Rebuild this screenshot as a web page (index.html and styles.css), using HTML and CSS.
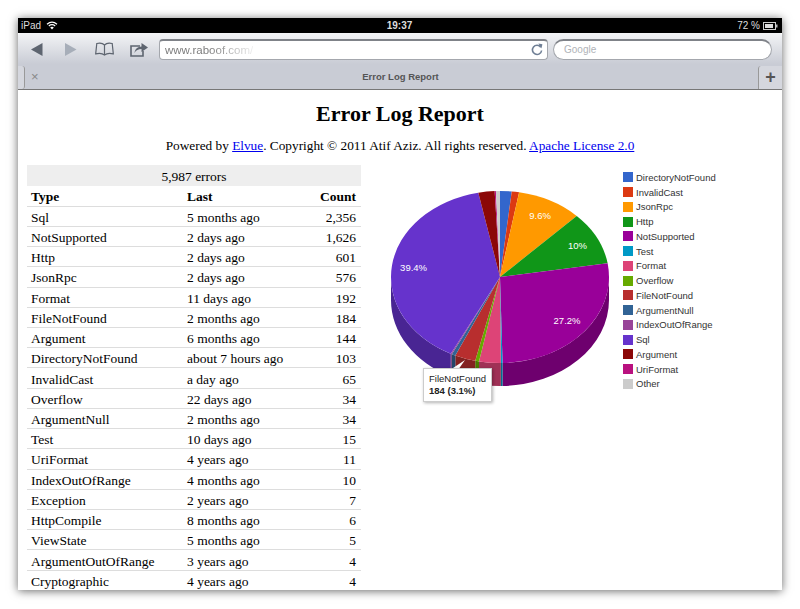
FILE: index.html
```html
<!DOCTYPE html>
<html lang="en">
<head>
    <meta charset="UTF-8">
    <meta name="viewport" content="width=device-width, initial-scale=1.0">
    <title>Error Log Report</title>
    <link rel="stylesheet" href="styles.css">
</head>
<body>
    <div class="window">
        <div class="statusbar">
            <div class="status-side">
                <span>iPad</span>
                <svg class="wifi" width="12" height="9" viewBox="0 0 12 9">
                    <path d="M1 3.2C4 .6 8 .6 11 3.2M2.8 5C4.8 3.4 7.2 3.4 9.2 5" fill="none" stroke="#fff" stroke-width="1.2"/>
                    <path d="M4.2 6.4C5.3 5.6 6.7 5.6 7.8 6.4L6 8.4Z" fill="#fff"/>
                </svg>
            </div>
            <div class="status-time">19:37</div>
            <div class="status-side status-right">
                <span>72 %</span>
                <svg width="15" height="8" viewBox="0 0 15 8">
                    <rect x=".5" y=".5" width="12" height="7" fill="none" stroke="#ccc"/>
                    <rect x="2" y="2" width="8" height="4" fill="#ddd"/>
                    <rect x="13" y="2.5" width="1.5" height="3" fill="#bbb"/>
                </svg>
            </div>
        </div>

        <div class="toolbar">
            <svg class="tool" width="12" height="13" viewBox="0 0 12 13"><path d="M0 6.5L11.5 0V13Z" fill="#5e6570"/></svg>
            <svg class="tool" width="12" height="13" viewBox="0 0 12 13"><path d="M11.5 6.5L0 0V13Z" fill="#a7aeb9"/></svg>
            <svg class="tool" width="19" height="14" viewBox="0 0 19 14">
                <path d="M9.5 3C8 1.4 4.5.8 1.8 1.5L.7 11.8C3.8 11 7.4 11.2 9.5 13C11.6 11.2 15.2 11 18.3 11.8L17.2 1.5C14.5.8 11 1.4 9.5 3ZM9.5 3V13" fill="none" stroke="#5e6570" stroke-width="1.2"/>
            </svg>
            <svg class="tool" width="18" height="15" viewBox="0 0 18 15">
                <path d="M10 4H1V14H13V9" fill="none" stroke="#5e6570" stroke-width="1.6"/>
                <path d="M4.5 11C5 6.5 8 4.6 11.5 4.4V1L18 5.5L11.5 10V7C8.5 7 6 8 4.5 11Z" fill="#5e6570"/>
            </svg>
            <div class="address">
                <span class="url">www.raboof.com/</span>
                <svg width="12" height="13" viewBox="0 0 12 13">
                    <path d="M9.8 4.2A4.6 4.6 0 1 0 10.6 7.5" fill="none" stroke="#6f7f95" stroke-width="1.6"/>
                    <path d="M7.4 0.6L11.4 1.2L10.4 5.6Z" fill="#6f7f95"/>
                </svg>
            </div>
            <div class="search">Google</div>
        </div>

        <div class="tabbar">
            <div class="tab-stub"></div>
            <span class="tab-close">×</span>
            <div class="tab-title">Error Log Report</div>
            <div class="tab-new">+</div>
        </div>

        <div class="content">
            <h1>Error Log Report</h1>
            <p class="powered">Powered by <a href="#">Elvue</a>. Copyright © 2011 Atif Aziz. All rights reserved. <a href="#">Apache License 2.0</a></p>

            <div class="report">
                <table class="errors">
                    <caption>5,987 errors</caption>
                    <thead>
                        <tr><th>Type</th><th>Last</th><th class="num">Count</th></tr>
                    </thead>
                    <tbody>
                        <tr><td>Sql</td><td>5 months ago</td><td class="num">2,356</td></tr>
                        <tr><td>NotSupported</td><td>2 days ago</td><td class="num">1,626</td></tr>
                        <tr><td>Http</td><td>2 days ago</td><td class="num">601</td></tr>
                        <tr><td>JsonRpc</td><td>2 days ago</td><td class="num">576</td></tr>
                        <tr><td>Format</td><td>11 days ago</td><td class="num">192</td></tr>
                        <tr><td>FileNotFound</td><td>2 months ago</td><td class="num">184</td></tr>
                        <tr><td>Argument</td><td>6 months ago</td><td class="num">144</td></tr>
                        <tr><td>DirectoryNotFound</td><td>about 7 hours ago</td><td class="num">103</td></tr>
                        <tr><td>InvalidCast</td><td>a day ago</td><td class="num">65</td></tr>
                        <tr><td>Overflow</td><td>22 days ago</td><td class="num">34</td></tr>
                        <tr><td>ArgumentNull</td><td>2 months ago</td><td class="num">34</td></tr>
                        <tr><td>Test</td><td>10 days ago</td><td class="num">15</td></tr>
                        <tr><td>UriFormat</td><td>4 years ago</td><td class="num">11</td></tr>
                        <tr><td>IndexOutOfRange</td><td>4 months ago</td><td class="num">10</td></tr>
                        <tr><td>Exception</td><td>2 years ago</td><td class="num">7</td></tr>
                        <tr><td>HttpCompile</td><td>8 months ago</td><td class="num">6</td></tr>
                        <tr><td>ViewState</td><td>5 months ago</td><td class="num">5</td></tr>
                        <tr><td>ArgumentOutOfRange</td><td>3 years ago</td><td class="num">4</td></tr>
                        <tr><td>Cryptographic</td><td>4 years ago</td><td class="num">4</td></tr>
                    </tbody>
                </table>

                <div class="chart">
                    <svg id="pie" width="240" height="240" viewBox="0 0 240 240"></svg>
                    <ul id="legend" class="legend"></ul>
                    <div class="tooltip">FileNotFound<br><b>184 (3.1%)</b></div>
                </div>
            </div>
        </div>
    </div>
    <script src="chart.js"></script>
</body>
</html>
```

FILE: styles.css
```css
* {
    box-sizing: border-box;
}
html, body {
    height: 100%;
}
body {
    margin: 0;
    padding: 18px 18px 19px;
    background: #fff;
    overflow: hidden;
    font-family: 'Liberation Sans', Arial, sans-serif;
}
.window {
    height: 100%;
    display: flex;
    flex-direction: column;
    overflow: hidden;
    background: #fff;
    box-shadow: 0 1px 9px rgba(0,0,0,0.6);
}

/* status bar */
.statusbar {
    flex: 0 0 15px;
    display: flex;
    align-items: center;
    justify-content: space-between;
    padding: 0 4px 0 3px;
    background: #000;
    color: #ddd;
    font-size: 10px;
}
.status-side {
    flex: 1;
    display: flex;
    align-items: center;
    gap: 5px;
}
.status-right {
    justify-content: flex-end;
    gap: 3px;
}
.status-time {
    font-weight: bold;
}

/* toolbar */
.toolbar {
    flex: 0 0 31px;
    display: flex;
    align-items: center;
    padding: 1px 10px 0 13px;
    background: linear-gradient(#f3f4f6, #c9ccd5);
    border-top-left-radius: 3px;
    border-top-right-radius: 3px;
}
.tool {
    margin-right: 22px;
}
.tool:nth-child(2) {
    margin-right: 18px;
}
.tool:nth-child(3) {
    margin-right: 16px;
}
.tool:nth-child(4) {
    margin-right: 11px;
}
.address, .search {
    height: 21px;
    display: flex;
    align-items: center;
    background: #fff;
    border: 1px solid #a4a7ad;
    border-top: 2px solid #7f8288;
    font-size: 10px;
}
.address {
    width: 389px;
    justify-content: space-between;
    padding: 0 4px 0 5px;
    border-radius: 4px;
}
.url {
    font-size: 11.5px;
    background: linear-gradient(90deg, #777 50%, #eee 100%);
    -webkit-background-clip: text;
    background-clip: text;
    color: transparent;
}
.search {
    width: 219px;
    margin-left: 5px;
    padding-left: 10px;
    border-radius: 11px;
    color: #b0b3b8;
}

/* tabs */
.tabbar {
    flex: 0 0 26px;
    display: flex;
    align-items: center;
    background: #c9ccd5;
    border-bottom: 1px solid #777;
    color: #555;
}
.tab-stub {
    width: 7px;
    height: 23px;
    align-self: flex-end;
    background: #d5d7de;
    border-right: 1px solid #999;
    border-top-right-radius: 3px;
    border-bottom-right-radius: 3px;
}
.tab-close {
    margin-left: 6px;
    width: 9px;
    font-size: 13px;
    color: #888;
}
.tab-title {
    flex: 1;
    text-align: center;
    font-size: 9.5px;
    font-weight: bold;
    padding-left: 3px;
}
.tab-new {
    width: 24px;
    height: 23px;
    align-self: flex-end;
    text-align: center;
    font-size: 18px;
    font-weight: bold;
    line-height: 22px;
    background: #d5d7de;
    border-left: 1px solid #999;
    border-top-left-radius: 3px;
}

/* page */
.content {
    flex: 1;
    min-height: 0;
    font-family: 'Liberation Serif', 'Times New Roman', serif;
    color: #000;
}
h1 {
    margin: 11px 0 0;
    font-size: 22px;
    line-height: 25px;
    text-align: center;
}
.powered {
    margin: 11px 0 0;
    font-size: 13.3px;
    line-height: 17px;
    text-align: center;
}
.report {
    display: flex;
    margin-top: 11px;
    padding-left: 9px;
}

/* table */
.errors {
    flex: 0 0 334px;
    width: 334px;
    border-collapse: collapse;
    table-layout: fixed;
    font-size: 13.5px;
    line-height: 15px;
}
.errors caption {
    height: 21px;
    line-height: 23px;
    background: #eee;
}
.errors th, .errors td {
    height: 20.22px;
    padding: 2px 5px 0 4px;
    text-align: left;
    border-bottom: 1px solid #ddd;
    white-space: nowrap;
}
.errors th:first-child {
    width: 156px;
}
.errors .num {
    text-align: right;
}

/* chart */
.chart {
    position: relative;
    flex: 1;
    display: flex;
    padding-left: 20px;
}
.legend {
    margin: 5px 0 0 2px;
    padding: 0;
    list-style: none;
    font-family: 'Liberation Sans', Arial, sans-serif;
    font-size: 9.5px;
    color: #333;
}
.legend li {
    height: 14.76px;
    display: flex;
    align-items: center;
    gap: 3px;
}
.legend i {
    width: 10px;
    height: 10px;
}
.tooltip {
    position: absolute;
    left: 62px;
    top: 203px;
    width: 69px;
    height: 34px;
    padding: 4px 5px;
    background: #fff;
    border: 1px solid #ccc;
    box-shadow: 1px 1px 3px rgba(0,0,0,0.3);
    font-family: 'Liberation Sans', Arial, sans-serif;
    font-size: 9.5px;
    line-height: 12px;
    color: #222;
}
```

FILE: chart.js
```js
// Pie data, clockwise from the top
const slices = [
    { name: "DirectoryNotFound", value: 103, color: "#3366cc" },
    { name: "InvalidCast", value: 65, color: "#dc3912" },
    { name: "JsonRpc", value: 576, color: "#ff9900", label: "9.6%" },
    { name: "Http", value: 601, color: "#109618", label: "10%" },
    { name: "NotSupported", value: 1626, color: "#990099", label: "27.2%" },
    { name: "Test", value: 15, color: "#0099c6" },
    { name: "Format", value: 192, color: "#dd4477" },
    { name: "Overflow", value: 34, color: "#66aa00" },
    { name: "FileNotFound", value: 184, color: "#b82e2e" },
    { name: "ArgumentNull", value: 34, color: "#316395" },
    { name: "IndexOutOfRange", value: 10, color: "#994499" },
    { name: "Sql", value: 2356, color: "#6633cc", label: "39.4%" },
    { name: "Argument", value: 144, color: "#8b0707" },
    { name: "UriFormat", value: 11, color: "#b9117f" },
    { name: "Other", value: 36, color: "#cccccc" }
];

const cx = 119, cy = 112, rx = 109, ry = 86, depth = 23;
const total = slices.reduce((sum, s) => sum + s.value, 0);
const svg = document.getElementById("pie");
const legend = document.getElementById("legend");

function point(angle, drop) {
    const x = cx + rx * Math.sin(angle);
    const y = cy - ry * Math.cos(angle) + (drop || 0);
    return x.toFixed(2) + " " + y.toFixed(2);
}

function add(tag, attrs, text) {
    const el = document.createElementNS("http://www.w3.org/2000/svg", tag);
    for (const key in attrs) el.setAttribute(key, attrs[key]);
    if (text) el.textContent = text;
    svg.appendChild(el);
}

function darken(hex) {
    const n = parseInt(hex.slice(1), 16);
    const part = (shift) => Math.round(((n >> shift) & 255) * 0.72);
    return `rgb(${part(16)},${part(8)},${part(0)})`;
}

// Side wall, only the front half of the ellipse shows
let start = 0;
slices.forEach((s) => {
    const end = start + s.value / total * Math.PI * 2;
    const from = Math.max(start, Math.PI / 2);
    const to = Math.min(end, Math.PI * 1.5);
    if (to > from) {
        add("path", {
            fill: darken(s.color),
            d: `M${point(from)}A${rx} ${ry} 0 0 1 ${point(to)}L${point(to, depth)}A${rx} ${ry} 0 0 0 ${point(from, depth)}Z`
        });
    }
    start = end;
});

// Top face and legend
start = 0;
slices.forEach((s) => {
    const end = start + s.value / total * Math.PI * 2;
    const large = end - start > Math.PI ? 1 : 0;
    add("path", {
        fill: s.color,
        d: `M${cx} ${cy}L${point(start)}A${rx} ${ry} 0 ${large} 1 ${point(end)}Z`
    });
    if (s.label) {
        const mid = (start + end) / 2;
        add("text", {
            x: cx + rx * 0.8 * Math.sin(mid),
            y: cy - ry * 0.8 * Math.cos(mid) + 3,
            "text-anchor": "middle",
            "font-family": "Liberation Sans, Arial, sans-serif",
            "font-size": "9.5",
            fill: "#fff"
        }, s.label);
    }
    const row = document.createElement("li");
    row.innerHTML = `<i style="background:${s.color}"></i>${s.name}`;
    legend.appendChild(row);
    start = end;
});

// Tooltip pointer
add("polygon", { points: "69,205 84,195 77,205", fill: "#fff" });
```
